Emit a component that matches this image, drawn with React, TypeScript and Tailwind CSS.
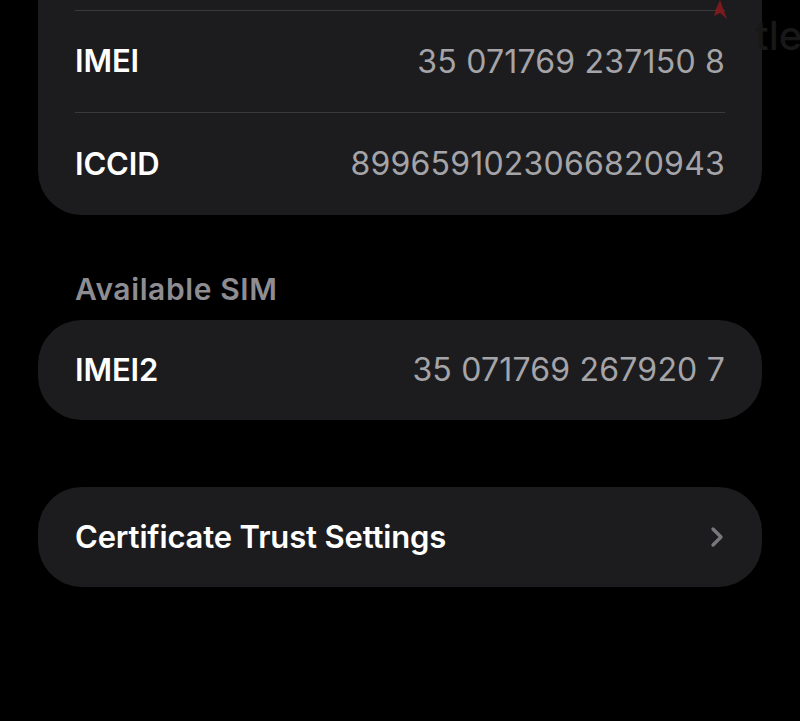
import React from 'react';

interface InfoRowProps {
  label: string;
  value?: string;
  chevron?: boolean;
  divider?: boolean;
  height?: string;
}

const InfoRow: React.FC<InfoRowProps> = ({ label, value, chevron, divider, height = 'h-[102px]' }) => (
  <div className={`flex items-center justify-between ${height} ${divider ? 'border-t border-[#3a3a3d]' : ''}`}>
    <span className="text-[31px] font-semibold text-white tracking-[-0.15px]">{label}</span>
    {value && <span className="text-[32px] text-[#a4a4a9] tracking-[0.2px]">{value}</span>}
    {chevron && (
      <svg width="14" height="22" viewBox="0 0 14 22" className="mr-[1px]">
        <path d="M3 3 L11 11 L3 19" fill="none" stroke="#77777c" strokeWidth="3.4" strokeLinecap="round" strokeLinejoin="round" />
      </svg>
    )}
  </div>
);

export default function App() {
  return (
    <div
      className="relative w-[800px] h-[721px] overflow-hidden bg-black"
      style={{ fontFamily: 'Inter, "Noto Sans", sans-serif' }}
    >
      <div className="mx-[38px] -mt-[92px] rounded-[44px] bg-[#1c1c1e] px-[37px]">
        <div className="h-[102px]" />
        <InfoRow label="IMEI" value="35 071769 237150 8" divider />
        <InfoRow label="ICCID" value="8996591023066820943" divider height="h-[103px]" />
      </div>

      <div className="mt-[56px] mb-[13px] pl-[75px] text-[30px] font-semibold leading-[36px] tracking-[0.6px] text-[#8d8d92]">
        Available SIM
      </div>

      <div className="mx-[38px] h-[100px] rounded-[44px] bg-[#1c1c1e] px-[37px] flex flex-col justify-center">
        <InfoRow label="IMEI2" value="35 071769 267920 7" height="h-[100px]" />
      </div>

      <div className="mx-[38px] mt-[67px] h-[100px] rounded-[44px] bg-[#1c1c1e] px-[37px] flex flex-col justify-center">
        <InfoRow label="Certificate Trust Settings" chevron height="h-[100px]" />
      </div>

      {/* watermark */}
      <div className="absolute left-[710px] top-0 h-[22px] w-[18px]">
        <svg width="18" height="22" viewBox="0 0 18 22">
          <path d="M10 0 L17 19 L10 13 L4 16 L6 9 Z" fill="#8b1a1c" opacity="0.85" />
        </svg>
      </div>
      <div className="absolute left-[755px] top-[14px] text-[40px] font-medium leading-[44px] text-[#181818]">
        tle
      </div>
    </div>
  );
}
